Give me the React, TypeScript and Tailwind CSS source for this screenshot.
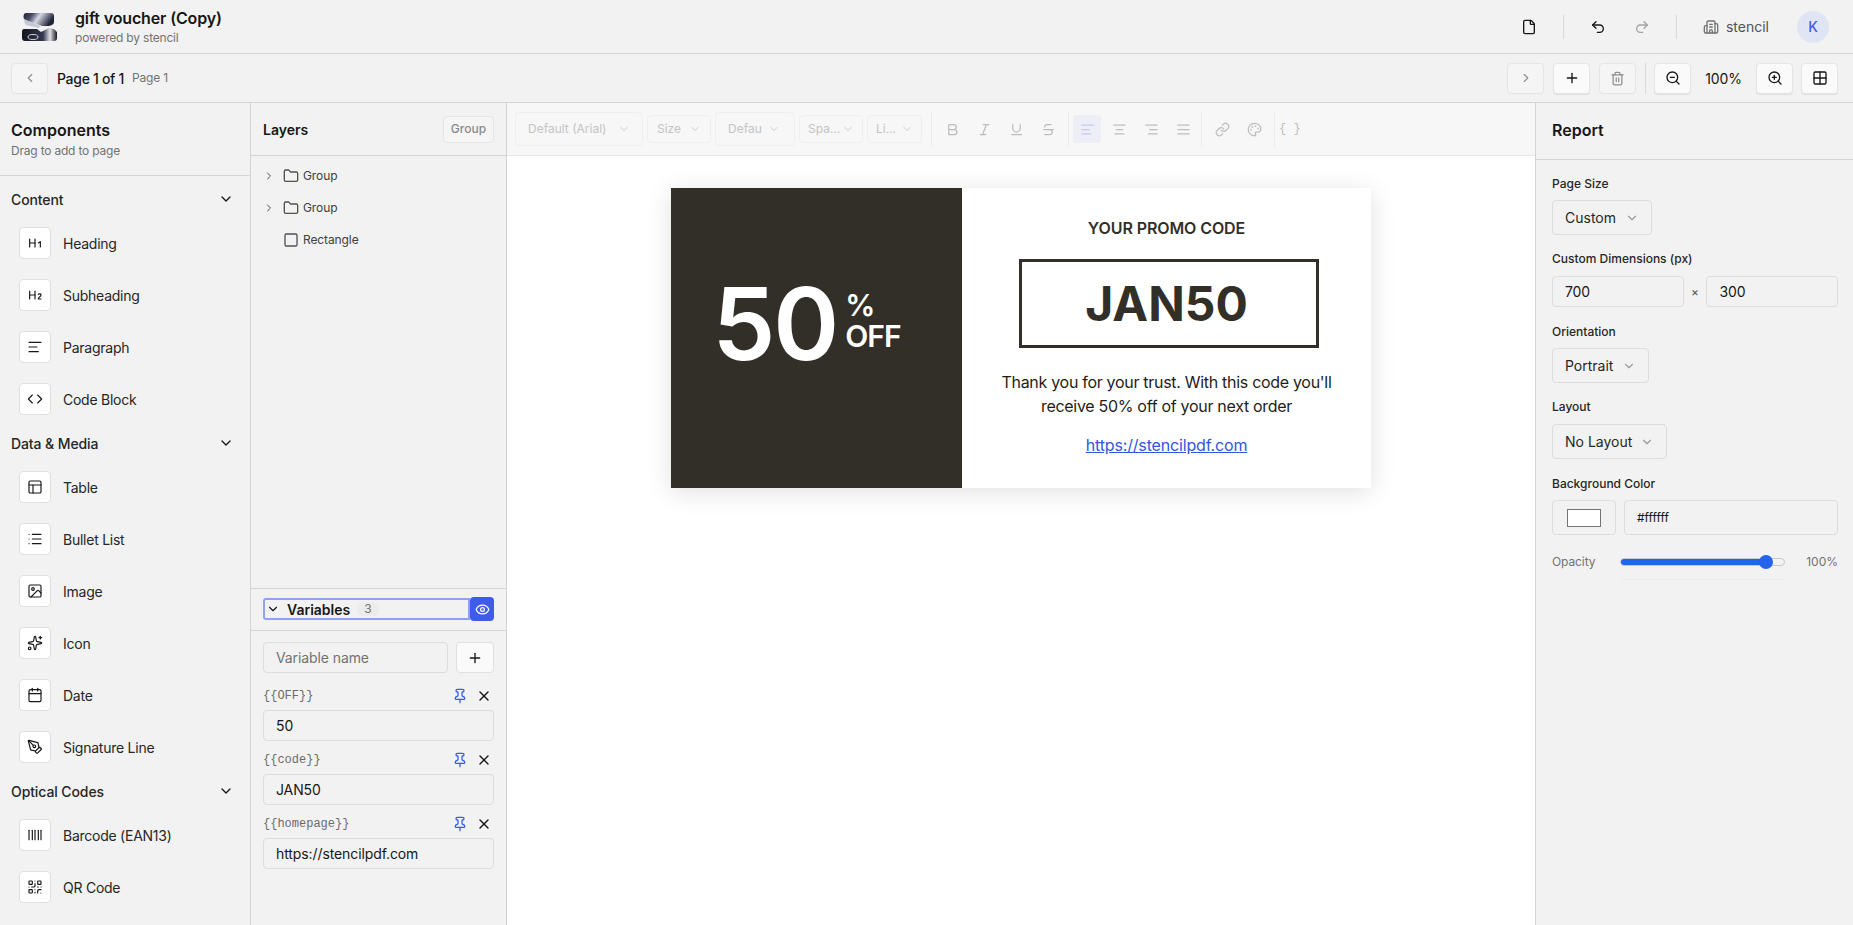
import React from "react";
import {
  AlignCenter, AlignJustify, AlignLeft, AlignRight, Bold, Building2, Calendar, ChevronDown, ChevronLeft, ChevronRight,
  Code, Eye, File, Folder, Grid2x2, Heading1, Heading2, Image as ImageIcon, Italic, Link, List, Palette, PanelsTopLeft,
  PenTool, Pin, Plus, QrCode, Redo2, Sparkles, Square, Strikethrough, Trash2, Underline, Undo2, X, ZoomIn, ZoomOut, Barcode,
} from "lucide-react";

const sections = [
  { title: "Content", items: [[Heading1, "Heading"], [Heading2, "Subheading"], [AlignLeft, "Paragraph"], [Code, "Code Block"]] },
  { title: "Data & Media", items: [[PanelsTopLeft, "Table"], [List, "Bullet List"], [ImageIcon, "Image"], [Sparkles, "Icon"], [Calendar, "Date"], [PenTool, "Signature Line"]] },
  { title: "Optical Codes", items: [[Barcode, "Barcode (EAN13)"], [QrCode, "QR Code"]] },
] as const;

function Logo() {
  return (
    <svg width="36" height="30" viewBox="0 0 36 30" className="shrink-0">
      <defs>
        <linearGradient id="lg1" x1="0" y1="0" x2="1" y2="0.3">
          <stop offset="0" stopColor="#1d2130" />
          <stop offset="0.3" stopColor="#4a4e68" />
          <stop offset="0.55" stopColor="#d5d7e4" />
          <stop offset="1" stopColor="#20243a" />
        </linearGradient>
        <linearGradient id="lg2" x1="0" y1="0" x2="1" y2="0">
          <stop offset="0" stopColor="#14161f" />
          <stop offset="0.6" stopColor="#34384d" />
          <stop offset="0.8" stopColor="#dfe0e8" />
          <stop offset="1" stopColor="#14161f" />
        </linearGradient>
      </defs>
      <path d="M5 1h25q3 0 3 3v6q0 2-2 3l-3 1-7 0L4 8Q2 6 2.500 4 3 1 5 1z" fill="url(#lg1)" />
      <path d="M3 7l16 7-1 2L5 13Q3 11 3 7z" fill="#c4c7d4" />
      <path d="M3 17h13l4 3 8-4 5 1 3 3v6q0 3-3 3H4q-3 0-3-3v-6q0-3 2-3z" fill="url(#lg2)" />
      <ellipse cx="12" cy="25" rx="5" ry="2.500" fill="none" stroke="#cfd2de" strokeWidth="1" />
    </svg>
  );
}

function IconBtn({ children, faded }: { children: React.ReactNode; faded?: boolean }) {
  return (
    <div className={`flex h-[31px] w-[37px] items-center justify-center rounded-[4px] border border-[#e5e5e5] ${faded ? "bg-[#f5f5f5] text-[#8f8f8f]" : "bg-[#fafafa] text-[#171717] shadow-[0_1px_1px_rgba(0,0,0,0.08)]"}`}>
      {children}
    </div>
  );
}

function Sep({ h = "h-6", c = "bg-[#d9d9d9]" }: { h?: string; c?: string }) {
  return <div className={`w-px ${c} ${h}`} />;
}

function Select({ label, w }: { label: string; w: string }) {
  return (
    <div className={`flex h-[35px] items-center justify-between rounded-[4px] border border-[#dcdcdc] pl-[12px] pr-[12px] text-[14px] text-[#262626] ${w}`}>
      <span>{label}</span>
      <ChevronDown size={14} className="text-[#9a9a9a]" />
    </div>
  );
}

function FieldLabel({ children, gap = "mb-[8px]" }: { children: React.ReactNode; gap?: string }) {
  return <div className={`h-[16px] text-[12px] font-medium leading-[16px] text-[#262626] ${gap}`}>{children}</div>;
}

function TextBox({ children, w = "w-full", muted }: { children: React.ReactNode; w?: string; muted?: boolean }) {
  return (
    <div className={`flex h-[31px] items-center rounded-[4px] border border-[#dcdcdc] px-[12px] text-[14px] tracking-[-0.1px] ${muted ? "text-[#737373]" : "text-[#171717]"} ${w}`}>
      {children}
    </div>
  );
}

function Variable({ name, value }: { name: string; value: string }) {
  return (
    <div className="mt-[8px]">
      <div className="flex h-[22px] items-center justify-between">
        <span className="font-['Liberation_Mono',monospace] text-[12px] text-[#6b6b6b]">{name}</span>
        <div className="flex items-center gap-[8px] pr-[2px]">
          <Pin size={16} className="text-[#3f5bea]" />
          <X size={16} className="text-[#171717]" />
        </div>
      </div>
      <div className="mt-[3px]"><TextBox>{value}</TextBox></div>
    </div>
  );
}

function ToolSelect({ label, w, h = "h-[34px]", px = "pl-[12px] pr-[12px]" }: { label: string; w: string; h?: string; px?: string }) {
  return (
    <div className={`flex items-center justify-between whitespace-nowrap rounded-[4px] border border-[#efefef] text-[12px] text-[#c4c4c4] ${px} ${w} ${h}`}>
      <span>{label}</span>
      <ChevronDown size={12} className="shrink-0 text-[#cccccc]" />
    </div>
  );
}

const toolSep = "bg-[#ebebeb]";

export default function App() {
  return (
    <div className="flex h-[925px] w-[1853px] flex-col overflow-hidden bg-[#f2f2f2] font-['Inter','Liberation_Sans',sans-serif] text-[#171717]">
      {/* Top bar */}
      <header className="flex h-[54px] shrink-0 items-center border-b border-[#d4d4d4] pl-[21px] pr-[24px]">
        <Logo />
        <div className="ml-[18px]">
          <div className="text-[16px] font-semibold leading-[20px] tracking-[-0.15px]">gift voucher (Copy)</div>
          <div className="mt-[2px] text-[12px] leading-[16px] tracking-[-0.2px] text-[#737373]">powered by stencil</div>
        </div>
        <div className="ml-auto flex items-center">
          <File size={16} className="text-[#171717]" />
          <div className="ml-[26px]"><Sep /></div>
          <Undo2 size={16} className="ml-[26px]" />
          <Redo2 size={16} className="ml-[28px] text-[#a3a3a3]" />
          <div className="ml-[26px]"><Sep /></div>
          <Building2 size={16} className="ml-[26px] text-[#737373]" />
          <span className="ml-[7px] text-[14px] text-[#525252]">stencil</span>
          <div className="ml-[28px] flex h-8 w-8 items-center justify-center rounded-full bg-[#e0e5f5] text-[14px] font-medium text-[#3f5bea]">K</div>
        </div>
      </header>

      {/* Page bar */}
      <div className="flex h-[49px] shrink-0 items-center border-b border-[#d4d4d4] pl-[11px] pr-[15px]">
        <IconBtn faded><ChevronLeft size={14} /></IconBtn>
        <span className="ml-[9px] text-[14px] font-medium tracking-[-0.3px]">Page 1 of 1</span>
        <span className="ml-[8px] text-[12px] tracking-[-0.2px] text-[#737373]">Page 1</span>
        <div className="ml-auto flex items-center gap-[8px]">
          <div className="mr-[1px] flex items-center gap-[9px]">
            <IconBtn faded><ChevronRight size={14} /></IconBtn>
            <IconBtn><Plus size={16} /></IconBtn>
            <IconBtn faded><Trash2 size={15} /></IconBtn>
          </div>
          <Sep h="h-[31px]" />
          <IconBtn><ZoomOut size={16} /></IconBtn>
          <div className="flex w-[49px] items-center justify-center text-[14px] tracking-[-0.1px]">100%</div>
          <IconBtn><ZoomIn size={16} /></IconBtn>
          <IconBtn><Grid2x2 size={16} /></IconBtn>
        </div>
      </div>

      <div className="flex min-h-0 flex-1">
        {/* Components */}
        <aside className="w-[251px] shrink-0 overflow-hidden border-r border-[#d4d4d4]">
          <div className="h-[73px] border-b border-[#d4d4d4] px-[11px] pt-[16px]">
            <div className="text-[16px] font-semibold leading-[22px]">Components</div>
            <div className="mt-[2px] text-[12px] leading-[16px] tracking-[-0.2px] text-[#737373]">Drag to add to page</div>
          </div>
          <div className="pt-[9px]">
            {sections.map((s) => (
              <section key={s.title} className="mb-[14px]">
                <div className="flex h-7 items-center justify-between pl-[11px] pr-[16px]">
                  <span className="text-[14px] font-medium tracking-[-0.1px] text-[#262626]">{s.title}</span>
                  <ChevronDown size={16} />
                </div>
                <div className="mt-[14px] flex flex-col gap-5 pl-[19px]">
                  {s.items.map(([Icon, label]) => (
                    <div key={label} className="flex items-center">
                      <div className="flex h-8 w-8 items-center justify-center rounded-[4px] border border-[#e0e0e0] bg-white">
                        <Icon size={16} strokeWidth={1.75} />
                      </div>
                      <span className="ml-3 text-[14px] tracking-[-0.25px] text-[#262626]">{label}</span>
                    </div>
                  ))}
                </div>
              </section>
            ))}
          </div>
        </aside>

        {/* Layers */}
        <aside className="flex w-[256px] shrink-0 flex-col border-r border-[#d4d4d4]">
          <div className="flex h-[53px] shrink-0 items-center justify-between border-b border-[#d4d4d4] pl-[12px] pr-[12px]">
            <span className="text-[14px] font-semibold">Layers</span>
            <div className="flex h-[27px] w-[51px] items-center justify-center rounded-[4px] border border-[#e5e5e5] bg-[#f5f5f5] text-[12px] font-medium text-[#8a8a8a]">Group</div>
          </div>
          <div className="flex-1 pt-[4px]">
            {[{ n: "Group", c: true }, { n: "Group", c: true }, { n: "Rectangle", c: false }].map((r, i) => (
              <div key={i} className="flex h-8 items-center pl-[12px] text-[12px] tracking-[-0.1px] text-[#404040]">
                <span className="flex w-[12px] justify-center">{r.c && <ChevronRight size={12} className="text-[#525252]" />}</span>
                {r.c ? <Folder size={16} className="ml-[8px] text-[#525252]" /> : <Square size={16} className="ml-[8px] text-[#525252]" />}
                <span className="ml-[4px]">{r.n}</span>
              </div>
            ))}
          </div>
          <div className="h-[337px] shrink-0 border-t border-[#d4d4d4]">
            <div className="flex h-[42px] items-center border-b border-[#d4d4d4] pb-[1px] pl-[12px] pr-[12px]">
              <div className="flex h-[22px] flex-1 items-center rounded-l-[3px] border-2 border-[#8fa2ee] pl-[1px]">
                <ChevronDown size={14} />
                <span className="ml-[7px] text-[14px] font-semibold">Variables</span>
                <span className="ml-[6px] rounded-full bg-[#ececec] px-[8px] text-[12px] leading-[14px] text-[#737373]">3</span>
              </div>
              <div className="flex h-6 w-6 items-center justify-center rounded-[4px] bg-[#3f5bea] text-white"><Eye size={15} /></div>
            </div>
            <div className="px-[12px] pt-[11px]">
              <div className="mb-[12px] flex gap-[8px]">
                <TextBox w="flex-1" muted>Variable name</TextBox>
                <div className="flex h-[31px] w-[38px] items-center justify-center rounded-[4px] border border-[#e0e0e0] bg-[#fafafa]"><Plus size={16} /></div>
              </div>
              <Variable name="{{OFF}}" value="50" />
              <Variable name="{{code}}" value="JAN50" />
              <Variable name="{{homepage}}" value="https://stencilpdf.com" />
            </div>
          </div>
        </aside>

        {/* Canvas */}
        <main className="flex min-w-0 flex-1 flex-col bg-white">
          <div className="flex h-[53px] shrink-0 items-center gap-[4px] border-b border-[#e8e8e8] bg-[#f7f7f7] pl-[8px]">
            <ToolSelect label="Default (Arial)" w="w-[128px]" />
            <ToolSelect label="Size" w="w-[64px]" h="h-[28px]" px="pl-[9px] pr-[9px]" />
            <ToolSelect label="Defau" w="w-[80px]" px="pl-[12px] pr-[14px]" />
            <ToolSelect label="Spa..." w="w-[64px]" h="h-[28px]" px="pl-[8px] pr-[8px]" />
            <ToolSelect label="Li..." w="w-[55px]" h="h-[28px]" px="pl-[8px] pr-[8px]" />
            <div className="ml-[5px]"><Sep h="h-[36px]" c={toolSep} /></div>
            <div className="flex items-center text-[#bdbdbd]">
              {[Bold, Italic, Underline, Strikethrough].map((I, i) => (
                <span key={i} className="flex w-[32px] justify-center"><I size={15} /></span>
              ))}
            </div>
            <Sep h="h-[36px]" c={toolSep} />
            <div className="flex items-center text-[#bdbdbd]">
              <span className="flex h-[28px] w-[28px] items-center justify-center rounded-[4px] bg-[#eeeff6] text-[#c4cbee]"><AlignLeft size={15} /></span>
              {[AlignCenter, AlignRight, AlignJustify].map((I, i) => (
                <span key={i} className="ml-[4px] flex w-[28px] justify-center"><I size={15} /></span>
              ))}
            </div>
            <Sep h="h-[36px]" c={toolSep} />
            <div className="flex items-center text-[#bdbdbd]">
              <span className="flex w-[32px] justify-center"><Link size={15} /></span>
              <span className="flex w-[32px] justify-center"><Palette size={15} /></span>
            </div>
            <Sep h="h-[36px]" c={toolSep} />
            <span className="font-['Liberation_Mono',monospace] text-[12px] text-[#bdbdbd]">{"{ }"}</span>
          </div>
          <div className="flex-1 pt-[32px]">
            <div className="mx-auto flex h-[300px] w-[700px] shadow-[0_4px_24px_rgba(0,0,0,0.12)]">
              <div className="flex w-[291px] items-center justify-center gap-[8px] bg-[#322f29] pb-[28px] pr-[20px] text-white">
                <span className="text-[100px] font-semibold leading-none tracking-[-2px]">50</span>
                <div className="mb-[9px] flex flex-col">
                  <span className="text-[30px] font-semibold leading-[32px]">%</span>
                  <span className="text-[30px] font-semibold leading-[30px] tracking-[-1px]">OFF</span>
                </div>
              </div>
              <div className="flex flex-1 flex-col items-center pt-[30px] text-[#322f29]">
                <div className="text-[16px] font-semibold leading-[20px] tracking-[-0.1px]">YOUR PROMO CODE</div>
                <div className="ml-[4px] mt-[21px] flex h-[89px] w-[300px] items-center justify-center border-[3px] border-[#322f29] pr-[4px] text-[48px] font-bold">JAN50</div>
                <div className="mt-[22px] w-[360px] text-center text-[16px] leading-[24px] tracking-[-0.3px] text-[#1f1d19]">
                  Thank you for your trust. With this code you'll<br />receive 50% off of your next order
                </div>
                <div className="mt-[15px] text-[16px] leading-[24px] tracking-[-0.16px] text-[#3056e0] underline">https://stencilpdf.com</div>
              </div>
            </div>
          </div>
        </main>

        {/* Report */}
        <aside className="w-[318px] shrink-0 border-l border-[#d4d4d4]">
          <div className="flex h-[57px] items-center border-b border-[#d4d4d4] px-[16px] pb-[2px] text-[16px] font-semibold">Report</div>
          <div className="pl-[16px] pr-[15px] pt-[16px]">
            <FieldLabel>Page Size</FieldLabel>
            <Select label="Custom" w="w-[100px]" />
            <div className="mt-[16px]"><FieldLabel gap="mb-[9px]">Custom Dimensions (px)</FieldLabel></div>
            <div className="flex items-center">
              <TextBox w="w-[132px]">700</TextBox>
              <span className="flex w-[23px] justify-center text-[12px] text-[#525252]">×</span>
              <TextBox w="w-[132px]">300</TextBox>
            </div>
            <div className="mt-[17px]"><FieldLabel>Orientation</FieldLabel></div>
            <Select label="Portrait" w="w-[97px]" />
            <div className="mt-[16px]"><FieldLabel gap="mb-[9px]">Layout</FieldLabel></div>
            <Select label="No Layout" w="w-[115px]" />
            <div className="mt-[17px]"><FieldLabel>Background Color</FieldLabel></div>
            <div className="flex gap-[8px]">
              <div className="flex h-[35px] w-[64px] items-center justify-center rounded-[4px] border border-[#dcdcdc]">
                <div className="h-[18px] w-[34px] border border-[#737373] bg-white" />
              </div>
              <div className="flex h-[35px] flex-1 items-center rounded-[4px] border border-[#dcdcdc] px-[12px] text-[12px]">#ffffff</div>
            </div>
            <div className="mt-[17px] flex h-[20px] items-center">
              <span className="w-[68px] text-[12px] tracking-[-0.1px] text-[#737373]">Opacity</span>
              <div className="relative h-[8px] w-[165px] rounded-full border border-[#c9c9c9]">
                <div className="h-full w-[146px] rounded-full bg-[#2563eb]" />
                <div className="absolute left-[138px] top-[-4px] h-[14px] w-[14px] rounded-full bg-[#2563eb]" />
              </div>
              <span className="ml-auto text-[12px] text-[#737373]">100%</span>
            </div>
            <div className="ml-[68px] h-[8px] w-[167px] rounded-b-[4px] border-b border-[#ececec]" />
          </div>
        </aside>
      </div>
    </div>
  );
}
